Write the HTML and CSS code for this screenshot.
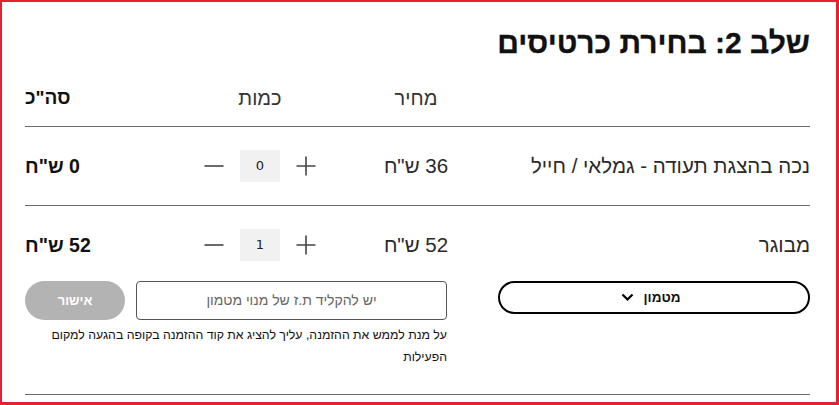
FILE: index.html
```html
<!DOCTYPE html>
<html lang="he" dir="rtl">
<head>
<meta charset="utf-8">
<title>שלב 2: בחירת כרטיסים</title>
<link rel="stylesheet" href="styles.css">
</head>
<body>
<div class="frame">
  <h1 class="title">שלב 2: בחירת כרטיסים</h1>

  <div class="grid head">
    <div class="c-name"></div>
    <div class="c-price">מחיר</div>
    <div class="c-qty">כמות</div>
    <div class="c-total strong">סה"כ</div>
  </div>

  <div class="grid row divided">
    <div class="c-name">נכה בהצגת תעודה - גמלאי / חייל</div>
    <div class="c-price">36 ש"ח</div>
    <div class="c-qty">
      <div class="qty">
        <button class="qbtn" aria-label="הוסף"><svg width="20" height="20" viewBox="0 0 20 20"><path d="M10 0.5V19.5M0.5 10H19.5" stroke="#444" stroke-width="1.6" fill="none"/></svg></button>
        <span class="qval">0</span>
        <button class="qbtn" aria-label="הסר"><svg width="20" height="20" viewBox="0 0 20 20"><path d="M0.5 10H19.5" stroke="#444" stroke-width="1.6" fill="none"/></svg></button>
      </div>
    </div>
    <div class="c-total strong">0 ש"ח</div>
  </div>

  <div class="block">
    <div class="grid row">
      <div class="c-name">מבוגר</div>
      <div class="c-price">52 ש"ח</div>
      <div class="c-qty">
        <div class="qty">
          <button class="qbtn" aria-label="הוסף"><svg width="20" height="20" viewBox="0 0 20 20"><path d="M10 0.5V19.5M0.5 10H19.5" stroke="#444" stroke-width="1.6" fill="none"/></svg></button>
          <span class="qval">1</span>
          <button class="qbtn" aria-label="הסר"><svg width="20" height="20" viewBox="0 0 20 20"><path d="M0.5 10H19.5" stroke="#444" stroke-width="1.6" fill="none"/></svg></button>
        </div>
      </div>
      <div class="c-total strong">52 ש"ח</div>
    </div>

    <div class="extras">
      <button class="dropdown">מטמון <svg width="13" height="9" viewBox="0 0 13 9"><path d="M1.5 1.5L6.5 6.5L11.5 1.5" stroke="#000" stroke-width="2.2" fill="none"/></svg></button>
      <div class="member">
        <div class="member-row">
          <div class="input">יש להקליד ת.ז של מנוי מטמון</div>
          <button class="confirm">אישור</button>
        </div>
        <p class="note">על מנת לממש את ההזמנה, עליך להציג את קוד ההזמנה בקופה בהגעה למקום הפעילות</p>
      </div>
    </div>
  </div>
</div>
</body>
</html>
```

FILE: styles.css
```css
* { box-sizing: border-box; }
html, body { margin: 0; padding: 0; background: #fff; }
body {
  font-family: "Liberation Sans", Arial, "DejaVu Sans", sans-serif;
  color: #222;
}
.frame {
  width: 839px;
  height: 405px;
  border: 2px solid #e32232;
  border-right-width: 3px;
  border-bottom-width: 3px;
  padding: 25px 26px 0 23px;
  overflow: hidden;
}
.title {
  margin: 0;
  font-size: 30px;
  line-height: 32px;
  font-weight: bold;
  color: #111;
  -webkit-text-stroke: 0.3px #111;
}
.grid {
  display: grid;
  grid-template-columns: 340px 108px 204px 133px;
  align-items: center;
}
.head {
  margin-top: 27px;
  padding-bottom: 16px;
  border-bottom: 1px solid #6b6b6b;
  font-size: 20px;
  line-height: 24px;
  color: #333;
}
.head .c-total { font-size: 19px; }
.c-price, .c-qty { text-align: center; }
.c-total { text-align: left; }
.strong { font-weight: bold; color: #111; }
.row {
  padding: 23px 0;
  font-size: 20.5px;
  line-height: 32px;
  color: #2a2a2a;
}
.divided { border-bottom: 1px solid #6b6b6b; }
.row .c-total { font-size: 19.5px; }
.qty {
  display: flex;
  justify-content: center;
  align-items: center;
  gap: 16px;
}
.qbtn {
  border: 0;
  background: none;
  padding: 0;
  width: 20px;
  height: 20px;
  display: flex;
}
.qval {
  width: 40px;
  height: 32px;
  background: #f1f1f1;
  font-family: "DejaVu Sans", sans-serif;
  font-size: 13px;
  line-height: 32px;
  text-align: center;
  color: #222;
}
.block {
  padding-bottom: 26px;
  border-bottom: 1px solid #6b6b6b;
}
.block .row { padding-bottom: 0; }
.extras {
  margin-top: 20px;
  display: flex;
  justify-content: space-between;
  align-items: flex-start;
}
.dropdown {
  width: 312px;
  height: 33px;
  border: 2px solid #000;
  border-radius: 17px;
  background: #fff;
  font-family: inherit;
  font-size: 13.5px;
  font-weight: bold;
  color: #111;
  display: flex;
  justify-content: center;
  align-items: center;
  gap: 9px;
  padding: 0 6px 0 0;
}
.member { width: 422px; }
.member-row {
  display: flex;
  justify-content: space-between;
}
.input {
  width: 311px;
  height: 39px;
  border: 1px solid #555;
  border-radius: 4px;
  font-size: 14px;
  line-height: 37px;
  text-align: center;
  color: #666;
}
.confirm {
  width: 100px;
  height: 39px;
  border: 0;
  border-radius: 20px;
  background: #b3b3b3;
  color: #fff;
  font-family: inherit;
  font-size: 13px;
  font-weight: bold;
  padding: 0;
}
.note {
  margin: 4px 0 0;
  font-size: 12.3px;
  line-height: 22px;
  color: #111;
}
```
